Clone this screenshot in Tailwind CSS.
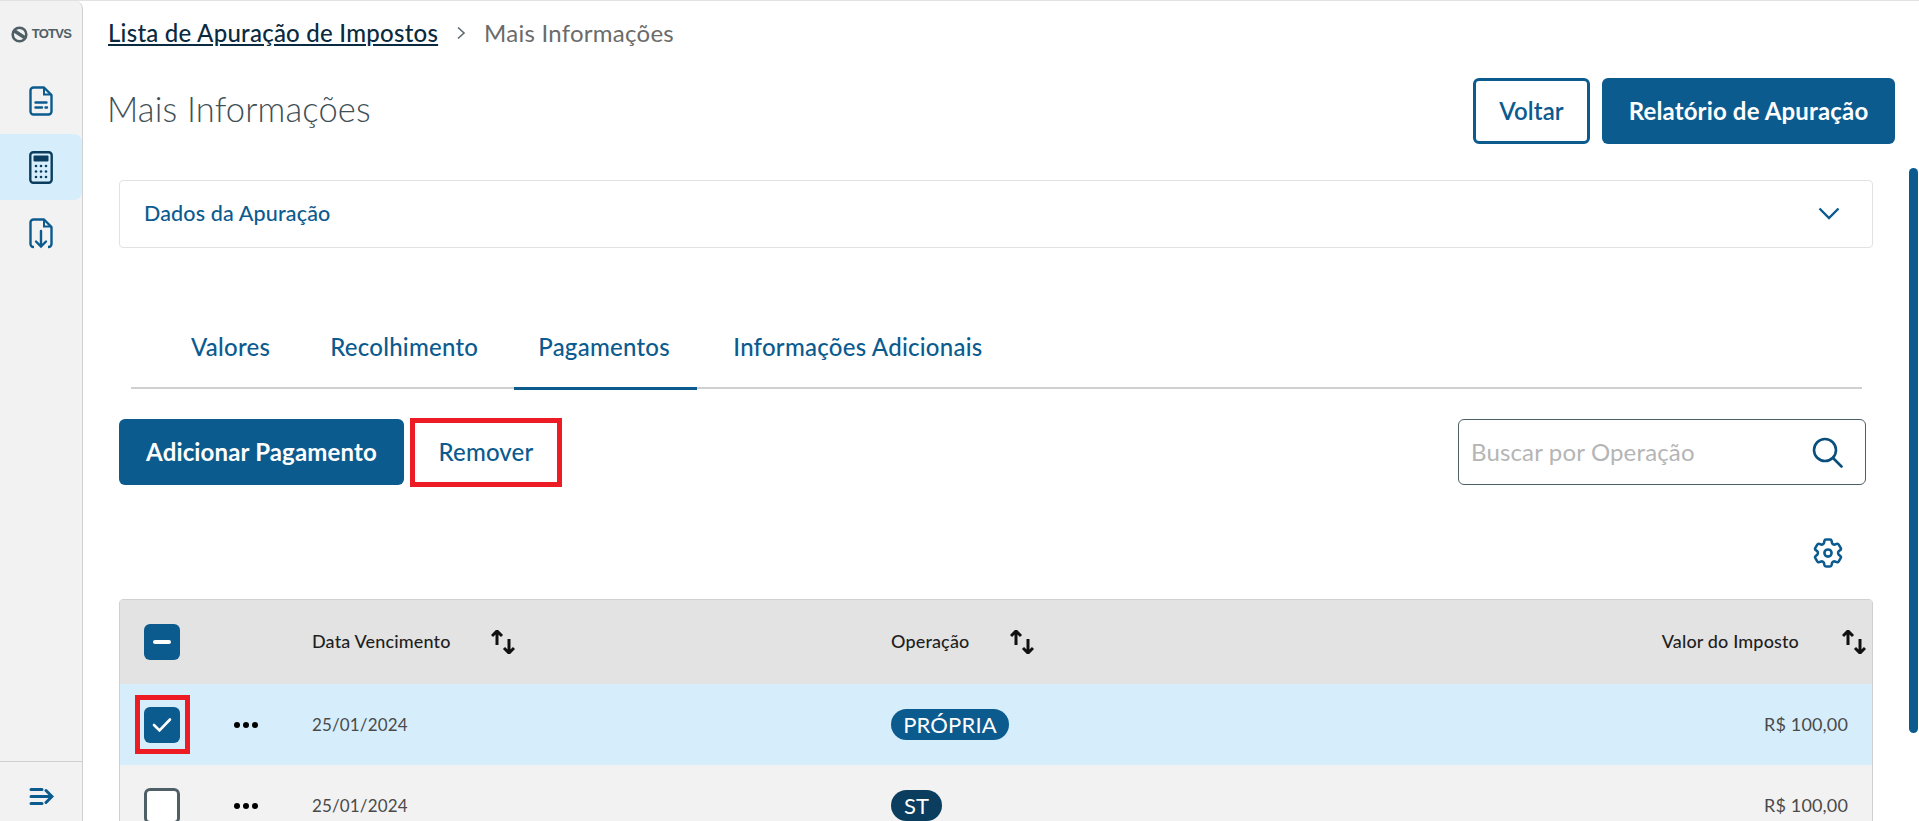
<!doctype html>
<html lang="pt-BR">

<head>
  <meta charset="UTF-8" />
  <script src="https://cdn.jsdelivr.net/npm/@tailwindcss/browser@4"></script>
  <title>Mais Informações</title>
</head>

<body class="w-screen h-screen overflow-hidden bg-white font-['Lato','Noto_Sans',sans-serif] tracking-[0.15px] text-[#0b5b8f]">
  <div class="flex h-[821px] border-t border-[#e2e2e2]">

    <!-- menu -->
    <aside class="flex flex-col w-[83px] shrink-0 h-full bg-[#f2f2f2] border-r border-[#d0d0d0] rounded-tr-lg">
      <div class="flex items-center justify-center gap-[4px] h-[66px]">
        <svg width="17" height="17" viewBox="0 0 17 17" fill="none">
          <circle cx="8.5" cy="8.5" r="6.8" stroke="#4f5f66" stroke-width="2.6" />
          <path d="M3.5 5 L13.500 11.500" stroke="#4f5f66" stroke-width="3.4" />
        </svg>
        <span class="font-['Liberation_Sans'] text-[13px] font-bold tracking-[-0.7px] text-[#4f5f66]">TOTVS</span>
      </div>
      <div class="flex items-center justify-center h-[67px]">
        <svg width="24" height="30" viewBox="0 0 24 30" fill="none" stroke="#0b5b8f" stroke-width="2.4">
          <path d="M4.500 1.500 H15 L22.500 9 V25.500 A3 3 0 0 1 19.500 28.500 H4.500 A3 3 0 0 1 1.500 25.500 V4.500 A3 3 0 0 1 4.500 1.500 Z" stroke-linejoin="round" />
          <path d="M15 2 V8.500 H22" stroke-width="2" />
          <path d="M6.500 16.500 H17.500 M6.500 21.500 H13 M16.500 21.500 H18" stroke-linecap="round" />
        </svg>
      </div>
      <div class="flex items-center justify-center h-[66px] bg-[#d6eefc] rounded-r-lg">
        <svg width="24" height="33" viewBox="0 0 24 33" fill="none">
          <rect x="1.300" y="1.300" width="21.400" height="30.400" rx="3" stroke="#0a3d5e" stroke-width="2.400" />
          <rect x="4.500" y="4.500" width="15" height="6" rx="1" fill="#0a3d5e" />
          <g fill="#0a3d5e">
            <circle cx="7" cy="15" r="1.300" /><circle cx="12" cy="15" r="1.300" /><circle cx="17" cy="15" r="1.300" />
            <circle cx="7" cy="20.500" r="1.300" /><circle cx="12" cy="20.500" r="1.300" /><circle cx="17" cy="20.500" r="1.300" />
            <circle cx="7" cy="26" r="1.300" /><circle cx="12" cy="26" r="1.300" /><circle cx="17" cy="26" r="1.300" />
          </g>
        </svg>
      </div>
      <div class="flex items-center justify-center h-[66px]">
        <svg width="24" height="31" viewBox="0 0 24 31" fill="none" stroke="#0b5b8f" stroke-width="2.400">
          <path d="M5 29 H4.500 A3 3 0 0 1 1.500 26 V4.500 A3 3 0 0 1 4.500 1.500 H15 L22.500 9 V26 A3 3 0 0 1 19.500 29 H19" stroke-linejoin="round" />
          <path d="M15 2 V8.500 H22" stroke-width="2" />
          <path d="M12 13 V28 M7 23.500 L12 28.500 L17 23.500" stroke-linecap="round" />
        </svg>
      </div>
      <div class="mt-auto flex items-center justify-center h-[60px] pt-[10px] border-t border-[#d0d0d0]">
        <svg width="25" height="19" viewBox="0 0 25 19" fill="none" stroke="#0b5b8f" stroke-width="3" stroke-linecap="round">
          <path d="M2 2.500 H13 M2 9.500 H22 M2 16.500 H13 M17 3.500 L23 9.500 L17 15.500" />
        </svg>
      </div>
    </aside>

    <!-- main -->
    <main class="flex-1 min-w-0 relative pl-[25px] overflow-hidden">
      <nav class="flex items-center h-[66px] text-[24px] tracking-[0.25px] -mt-px">
        <a class="text-[#0a2a40] underline underline-offset-2 font-medium">Lista de Apuração de Impostos</a>
        <svg class="mx-[18px]" width="10" height="14" viewBox="0 0 10 14" fill="none" stroke="#5b6a72" stroke-width="1.600">
          <path d="M2 1.500 L8 7 L2 12.500" />
        </svg>
        <span class="text-[#6b6b6b]">Mais Informações</span>
      </nav>

      <div class="flex items-center justify-between h-[66px] mt-3 pr-[24px]">
        <h1 class="text-[34.5px] font-light text-[#3f4f56] pb-[5px] -ml-px">Mais Informações</h1>
        <div class="flex gap-3">
          <button class="h-[66px] w-[117px] rounded-md border-[3px] border-[#0b5b8f] text-[24px] font-semibold">Voltar</button>
          <button class="h-[66px] w-[293px] rounded-md bg-[#0b5b8f] text-white text-[24px] font-bold">Relatório de Apuração</button>
        </div>
      </div>

      <section class="mt-[36px] ml-[11px] w-[1754px] h-[68px] flex items-center justify-between pl-6 pr-[32px] pb-[2px] border border-[#e2e2e2] rounded text-[21.5px] font-medium">
        Dados da Apuração
        <svg width="22" height="13" viewBox="0 0 22 13" fill="none" stroke="#0b5b8f" stroke-width="2.400">
          <path d="M1.500 1.500 L11 11 L20.500 1.500" />
        </svg>
      </section>

      <div class="mt-[61px] ml-[23px] w-[1731px] h-[80px] flex gap-3 pl-9 border-b-2 border-[#d0d0d0] text-[24px] tracking-[0.25px] font-medium">
        <a class="px-6 flex items-center pb-[3px]">Valores</a>
        <a class="px-6 flex items-center pb-[3px]">Recolhimento</a>
        <a class="flex items-center w-[183px] h-[81px] pl-6 pb-[3px] border-b-[3px] border-[#0b5b8f]">Pagamentos</a>
        <a class="px-6 flex items-center pb-[3px]">Informações Adicionais</a>
      </div>

      <div class="mt-[30px] ml-[11px] flex items-center w-[1747px] h-[66px]">
        <button class="h-[66px] w-[285px] rounded-md bg-[#0b5b8f] text-white text-[24px] font-bold">Adicionar Pagamento</button>
        <button class="ml-[6px] h-[69px] w-[152px] border-[5px] border-[#ed1c24] text-[24px] font-medium">Remover</button>
        <div class="ml-auto flex items-center justify-between w-[408px] h-[66px] pl-[12px] pr-[22px] border border-[#4f5f66] rounded-md">
          <span class="text-[24px] text-[#b5b5b5]">Buscar por Operação</span>
          <svg width="31" height="31" viewBox="0 0 31 31" fill="none" stroke="#0a4f7c" stroke-width="2.600">
            <circle cx="13" cy="13" r="11" />
            <path d="M21 21 L29.500 29.500" stroke-linecap="round" />
          </svg>
        </div>
      </div>

      <div class="mt-[53px] ml-[11px] w-[1749px] flex justify-end pr-[25px] h-[30px]">
        <svg width="30" height="30" viewBox="2 2 20 20" fill="none" stroke="#0b5b8f" stroke-width="1.700" stroke-linejoin="round">
          <path d="M9.594 3.94c.09-.542.56-.94 1.11-.94h2.593c.55 0 1.02.398 1.11.94l.213 1.281c.063.374.313.686.645.87.074.04.147.083.22.127.325.196.72.257 1.075.124l1.217-.456a1.125 1.125 0 0 1 1.37.49l1.296 2.247a1.125 1.125 0 0 1-.26 1.431l-1.003.827c-.293.241-.438.613-.43.992a7.723 7.723 0 0 1 0 .255c-.008.378.137.75.43.991l1.004.827c.424.35.534.955.26 1.43l-1.298 2.247a1.125 1.125 0 0 1-1.369.491l-1.217-.456c-.355-.133-.75-.072-1.076.124a6.47 6.47 0 0 1-.22.128c-.331.183-.581.495-.644.869l-.213 1.281c-.09.543-.56.94-1.11.94h-2.594c-.55 0-1.019-.398-1.11-.94l-.213-1.281c-.062-.374-.312-.686-.644-.87a6.52 6.52 0 0 1-.22-.127c-.325-.196-.72-.257-1.076-.124l-1.217.456a1.125 1.125 0 0 1-1.369-.49l-1.297-2.247a1.125 1.125 0 0 1 .26-1.431l1.004-.827c.292-.24.437-.613.43-.991a6.932 6.932 0 0 1 0-.255c.007-.38-.138-.751-.43-.992l-1.004-.827a1.125 1.125 0 0 1-.26-1.43l1.297-2.247a1.125 1.125 0 0 1 1.37-.491l1.216.456c.356.133.751.072 1.076-.124.072-.044.146-.086.22-.128.332-.183.582-.495.644-.869l.214-1.28Z" />
          <circle cx="12" cy="12" r="2.400" />
        </svg>
      </div>

      <!-- table -->
      <div class="mt-[31px] ml-[11px] w-[1754px] border border-[#d0d0d0] rounded-t overflow-hidden">
        <div class="flex items-center h-[84px] bg-[#e3e3e3] text-[18px] text-[#1f1f1f] font-medium">
          <div class="flex justify-center w-[84px]">
            <span class="flex items-center justify-center w-9 h-9 rounded-md bg-[#0b5b8f]">
              <span class="w-[18px] h-1 rounded bg-white"></span>
            </span>
          </div>
          <div class="w-[108px]"></div>
          <div class="w-[579px] flex items-center">
            <span class="w-[179px] pb-[2px]">Data Vencimento</span>
            <svg width="24" height="24" viewBox="0 0 24 24" fill="none" stroke="#111" stroke-width="3"><path d="M6 1 V15 M1 6 L6 1 L11 6 M18 9 V23 M13 18 L18 23 L23 18" /></svg>
          </div>
          <div class="w-[594px] flex items-center">
            <span class="w-[119px] pb-[2px]">Operação</span>
            <svg width="24" height="24" viewBox="0 0 24 24" fill="none" stroke="#111" stroke-width="3"><path d="M6 1 V15 M1 6 L6 1 L11 6 M18 9 V23 M13 18 L18 23 L23 18" /></svg>
          </div>
          <div class="flex-1 flex items-center justify-end pr-[6px]">
            <span class="mr-[43px] pb-[2px]">Valor do Imposto</span>
            <svg width="24" height="24" viewBox="0 0 24 24" fill="none" stroke="#111" stroke-width="3"><path d="M6 1 V15 M1 6 L6 1 L11 6 M18 9 V23 M13 18 L18 23 L23 18" /></svg>
          </div>
        </div>

        <div class="flex items-center h-[81px] bg-[#d6eefc] text-[18px] text-[#4a4a4a]">
          <div class="flex justify-center w-[84px]">
            <span class="flex items-center justify-center w-[55px] h-[59px] border-[5px] border-[#ed1c24]">
              <span class="flex items-center justify-center w-9 h-9 shrink-0 rounded-md bg-[#0b5b8f]">
                <svg width="20" height="16" viewBox="0 0 20 16" fill="none" stroke="#fff" stroke-width="2.600" stroke-linecap="round"><path d="M2 8 L7.500 13.500 L18 2.500" /></svg>
              </span>
            </span>
          </div>
          <div class="w-[108px] flex gap-[3px] pl-[30px]"><i class="size-[6px] rounded-full bg-black"></i><i class="size-[6px] rounded-full bg-black"></i><i class="size-[6px] rounded-full bg-black"></i></div>
          <div class="w-[579px] text-[17px]">25/01/2024</div>
          <div class="w-[594px]"><span class="inline-flex items-center justify-center h-[31px] w-[118px] rounded-full bg-[#0b5b8f] text-white text-[22px]">PRÓPRIA</span></div>
          <div class="flex-1 text-right pr-6">R$ 100,00</div>
        </div>

        <div class="flex items-center h-[81px] bg-[#f2f2f2] text-[18px] text-[#4a4a4a]">
          <div class="flex justify-center w-[84px]">
            <span class="w-9 h-9 rounded-md bg-white border-[3px] border-[#4f5f66]"></span>
          </div>
          <div class="w-[108px] flex gap-[3px] pl-[30px]"><i class="size-[6px] rounded-full bg-black"></i><i class="size-[6px] rounded-full bg-black"></i><i class="size-[6px] rounded-full bg-black"></i></div>
          <div class="w-[579px] text-[17px]">25/01/2024</div>
          <div class="w-[594px]"><span class="inline-flex items-center justify-center h-[31px] w-[51px] rounded-full bg-[#0a3d5e] text-white text-[22px]">ST</span></div>
          <div class="flex-1 text-right pr-6">R$ 100,00</div>
        </div>
      </div>

      <!-- scrollbar -->
      <div class="absolute top-[167px] left-[1826px] w-[9px] h-[565px] rounded-full bg-[#0b5b8f]"></div>
    </main>
  </div>
</body>

</html>
